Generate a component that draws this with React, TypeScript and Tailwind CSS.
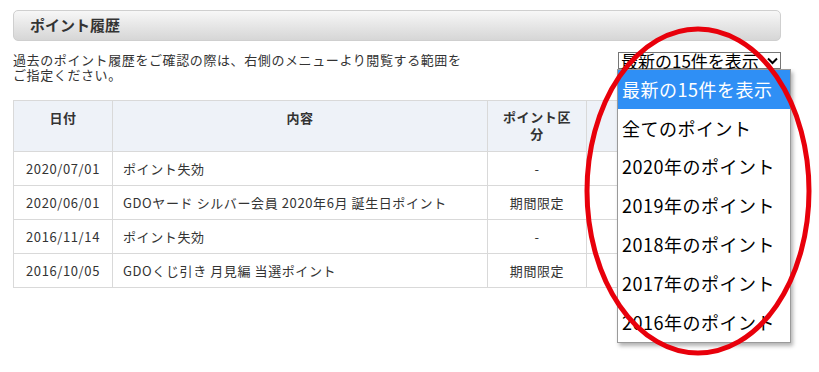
import * as React from "react";

const rows = [
  { date: "2020/07/01", content: "ポイント失効", type: "-" },
  { date: "2020/06/01", content: "GDOヤード シルバー会員 2020年6月 誕生日ポイント", type: "期間限定" },
  { date: "2016/11/14", content: "ポイント失効", type: "-" },
  { date: "2016/10/05", content: "GDOくじ引き 月見編 当選ポイント", type: "期間限定" },
];

const options = [
  "最新の15件を表示",
  "全てのポイント",
  "2020年のポイント",
  "2019年のポイント",
  "2018年のポイント",
  "2017年のポイント",
  "2016年のポイント",
];

export default function App() {
  return (
    <div
      className="relative w-[819px] h-[372px] overflow-hidden bg-white text-[#333]"
      style={{ fontFamily: '"Noto Sans CJK JP", "Noto Sans", sans-serif' }}
    >
      <div className="pl-[13px] pt-[10px] w-[781px]">
        <div className="h-[31px] rounded-[5px] border border-[#cfcfcf] bg-gradient-to-b from-[#f7f7f7] to-[#d6d6d6] flex items-center pl-[16px]">
          <span className="text-[15px] font-bold text-[#333]">ポイント履歴</span>
        </div>

        <div className="flex justify-between items-start mt-[11px]">
          <p className="text-[13px] leading-[15px] tracking-[0.6px] text-[#333]">
            過去のポイント履歴をご確認の際は、右側のメニューより閲覧する範囲を
            <br />
            ご指定ください。
          </p>
          <div className="w-[163px] h-[17px] border border-[#767676] bg-white flex items-center justify-between pl-[2px] pr-[2px]">
            <span className="text-[17px] leading-none text-black whitespace-nowrap">最新の15件を表示</span>
            <svg width="11" height="8" viewBox="0 0 11 8">
              <path d="M1 1.5 L5.5 6 L10 1.5" fill="none" stroke="#000" strokeWidth="2" />
            </svg>
          </div>
        </div>

        <table className="mt-[18px] w-[768px] border-collapse text-[13px] tracking-[0.6px] text-[#333]">
          <thead>
            <tr className="h-[51px] bg-[#eef2f8]">
              <th className="w-[99px] border border-[#d9d9d9] font-bold align-top pt-[7px]">日付</th>
              <th className="w-[375px] border border-[#d9d9d9] font-bold align-top pt-[7px]">内容</th>
              <th className="w-[99px] border border-[#d9d9d9] font-bold align-top pt-[7px] leading-[17px] px-[10px]">
                ポイント区分
              </th>
              <th className="border border-[#d9d9d9] font-bold align-top pt-[7px]">獲得ポイント</th>
            </tr>
          </thead>
          <tbody>
            {rows.map((r) => (
              <tr key={r.date} className="h-[34px]">
                <td className="border border-[#d9d9d9] text-center">{r.date}</td>
                <td className="border border-[#d9d9d9] pl-[10px]">{r.content}</td>
                <td className="border border-[#d9d9d9] text-center">{r.type}</td>
                <td className="border border-[#d9d9d9]"></td>
              </tr>
            ))}
          </tbody>
        </table>
      </div>

      <div className="absolute left-[617px] top-[69px] w-[174px] border border-[#9a9a9a] bg-white shadow-[2px_3px_4px_rgba(0,0,0,0.3)] overflow-hidden">
        {options.map((o, i) => (
          <div
            key={o}
            className={
              "h-[38.8px] flex items-center pl-[4px] text-[18px] tracking-[0.5px] whitespace-nowrap " +
              (i === 0 ? "bg-[#2f8ff5] text-white" : "text-black")
            }
          >
            {o}
          </div>
        ))}
      </div>

      <svg className="absolute left-0 top-0 pointer-events-none" width="819" height="372">
        <ellipse cx="698" cy="191" rx="111" ry="162" fill="none" stroke="#e8000b" strokeWidth="5" />
      </svg>
    </div>
  );
}
